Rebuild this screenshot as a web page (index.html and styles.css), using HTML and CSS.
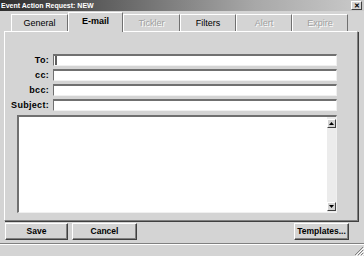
FILE: index.html
```html
<!DOCTYPE html>
<html>
<head>
<meta charset="utf-8">
<link rel="stylesheet" href="styles.css">
</head>
<body>
<div class="win">
  <div class="title">
    <span class="title-text">Event Action Request: NEW</span>
    <span class="close">&#x2715;</span>
  </div>
  <div class="tabs">
    <div class="tab w57">General</div>
    <div class="tab sel w55">E-mail</div>
    <div class="tab dis w57">Tickler</div>
    <div class="tab w56">Filters</div>
    <div class="tab dis w56">Alert</div>
    <div class="tab dis w56">Expire</div>
  </div>
  <div class="panel">
    <div class="fields">
      <div class="lbl">To:</div><div class="inp"><span class="caret"></span></div>
      <div class="lbl">cc:</div><div class="inp"></div>
      <div class="lbl">bcc:</div><div class="inp"></div>
      <div class="lbl">Subject:</div><div class="inp"></div>
    </div>
    <div class="memo">
      <div class="memo-body"></div>
      <div class="sb">
        <div class="arr"><svg width="5" height="3" viewBox="0 0 5 3"><path d="M2.5 0 L5 3 L0 3 Z" fill="#000"/></svg></div>
        <div class="track"></div>
        <div class="arr"><svg width="5" height="3" viewBox="0 0 5 3"><path d="M0 0 L5 0 L2.5 3 Z" fill="#000"/></svg></div>
      </div>
    </div>
  </div>
  <div class="buttons">
    <div class="btn save">Save</div>
    <div class="btn cancel">Cancel</div>
    <div class="spacer"></div>
    <div class="btn templ">Templates...</div>
  </div>
  <div class="status">
    <svg class="grip" width="10" height="10" viewBox="0 0 10 10">
      <path d="M9 1 L1 9 M9 4 L4 9 M9 7 L7 9" stroke="#808080" stroke-width="1"/>
      <path d="M10 2 L2 10 M10 5 L5 10 M10 8 L8 10" stroke="#ffffff" stroke-width="1"/>
    </svg>
  </div>
</div>
</body>
</html>
```
FILE: styles.css
```css
html, body {
  margin: 0;
  padding: 0;
}
body {
  width: 364px;
  height: 256px;
  overflow: hidden;
  background: #d4d4d4;
  font-family: "Liberation Sans", Arial, sans-serif;
}
.win {
  width: 364px;
  height: 256px;
  display: flex;
  flex-direction: column;
  background: #d4d4d4;
}
.title {
  height: 11px;
  display: flex;
  align-items: center;
  justify-content: space-between;
  background: linear-gradient(to right, #2e2e2e 0%, #6a6a6a 35%, #a8a8a8 70%, #cacaca 100%);
  padding: 0 2px 0 1px;
}
.title-text {
  color: #fff;
  font-weight: bold;
  font-size: 7px;
  line-height: 11px;
}
.close {
  width: 11px;
  height: 9px;
  box-sizing: border-box;
  background: #d4d4d4;
  border: 1px solid;
  border-color: #fff #404040 #404040 #fff;
  font-size: 7px;
  font-weight: bold;
  line-height: 7px;
  text-align: center;
  color: #000;
}
.tabs {
  height: 20px;
  display: flex;
  align-items: flex-end;
  padding-left: 11px;
}
.tab {
  height: 17px;
  box-sizing: border-box;
  border-top: 1px solid #fff;
  border-left: 1px solid #fff;
  border-right: 1px solid #707070;
  font-size: 9px;
  line-height: 16px;
  text-align: center;
  color: #000;
}
.w57 { width: 57px; }
.w56 { width: 56px; }
.w55 { width: 55px; }
.tab.sel {
  height: 20px;
  margin-bottom: -1px;
  background: #d4d4d4;
  font-weight: bold;
  line-height: 17px;
  position: relative;
  z-index: 1;
}
.tab.dis {
  color: #a0a0a0;
  text-shadow: 1px 1px 0 #fff;
}
.panel {
  margin-left: 4px;
  width: 354px;
  height: 190px;
  box-sizing: border-box;
  border-top: 1px solid #fff;
  border-left: 1px solid #fff;
  border-right: 1px solid #808080;
  border-bottom: 1px solid #808080;
  box-shadow: 1px 1px 0 #404040;
  padding-top: 22px;
}
.fields {
  display: grid;
  grid-template-columns: 44px 284px;
  column-gap: 4px;
  row-gap: 3px;
  grid-auto-rows: 12px;
}
.lbl {
  text-align: right;
  font-size: 9px;
  font-weight: bold;
  letter-spacing: 0.3px;
  line-height: 12px;
  color: #000;
}
.inp {
  background: #fff;
  box-sizing: border-box;
  border-top: 2px solid #707070;
  border-left: 1px solid #707070;
  border-bottom: 1px solid #f0f0f0;
  border-right: 1px solid #f0f0f0;
  position: relative;
}
.caret {
  position: absolute;
  left: 1px;
  top: 0;
  width: 2px;
  height: 9px;
  background: #606060;
}
.memo {
  margin: 4px 0 0 12px;
  width: 320px;
  height: 98px;
  box-sizing: border-box;
  background: #fff;
  border-top: 2px solid #707070;
  border-left: 2px solid #707070;
  border-bottom: 1px solid #f0f0f0;
  border-right: 1px solid #f0f0f0;
  display: flex;
}
.memo-body {
  flex: 1;
}
.sb {
  width: 9px;
  display: flex;
  flex-direction: column;
  background: #ececec;
  padding-top: 2px;
  padding-bottom: 1px;
}
.arr {
  width: 9px;
  height: 9px;
  box-sizing: border-box;
  background: #d4d4d4;
  border: 1px solid;
  border-color: #fff #404040 #404040 #fff;
  display: flex;
  align-items: center;
  justify-content: center;
}
.track {
  flex: 1;
}
.buttons {
  margin-top: 2px;
  height: 17px;
  display: flex;
}
.btn {
  height: 17px;
  box-sizing: border-box;
  border: 1px solid;
  border-color: #fff #404040 #404040 #fff;
  box-shadow: inset -1px -1px 0 #808080;
  font-size: 8.5px;
  font-weight: bold;
  line-height: 15px;
  text-align: center;
  color: #000;
}
.save { margin-left: 5px; width: 63px; }
.cancel { margin-left: 4px; width: 65px; }
.spacer { flex: 1; }
.templ { width: 55px; margin-right: 15px; }
.status {
  margin-top: 3px;
  height: 13px;
  box-sizing: border-box;
  border-top: 1px solid #808080;
  box-shadow: inset 0 1px 0 #fff;
  display: flex;
  justify-content: flex-end;
  align-items: flex-end;
}
.grip {
  display: block;
}
```
